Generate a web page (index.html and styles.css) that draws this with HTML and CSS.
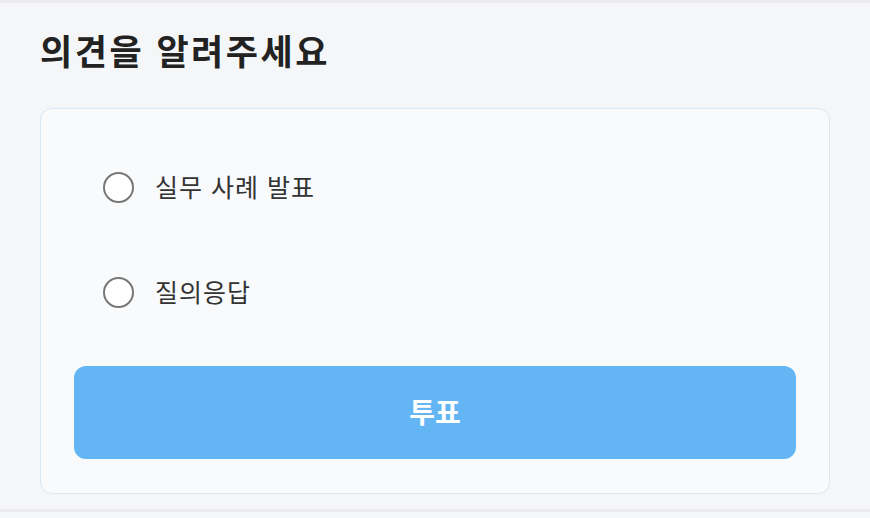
FILE: index.html
```html
<!DOCTYPE html>
<html lang="ko">
<head>
  <meta charset="UTF-8" />
  <meta name="viewport" content="width=device-width, initial-scale=1.0" />
  <title>의견을 알려주세요</title>
  <link rel="stylesheet" href="styles.css">
</head>
<body>
  <div class="poll-section">
    <h2 class="poll-title">의견을 알려주세요</h2>
    <form class="poll-card">
      <label class="poll-option">
        <input type="radio" name="vote" value="case">
        <span>실무 사례 발표</span>
      </label>
      <label class="poll-option">
        <input type="radio" name="vote" value="qna">
        <span>질의응답</span>
      </label>
      <button type="submit" class="vote-button">투표</button>
    </form>
  </div>
</body>
</html>
```

FILE: styles.css
```css
body {
  margin: 0;
  font-family: "Noto Sans CJK KR", "Noto Sans", sans-serif;
  background-color: #f5f6f8;
  color: #333;
}

.poll-section {
  border-top: 3px solid #ececee;
  border-bottom: 3px solid #ececee;
  padding: 23px 40px 19px 40px;
  height: 512px;
  box-sizing: border-box;
}

.poll-title {
  margin: 0 0 34px 0;
  font-size: 35px;
  font-weight: bold;
  letter-spacing: 2.5px;
  line-height: 48px;
  color: #222;
}

.poll-card {
  display: flex;
  flex-direction: column;
  background-color: #f8fafc;
  border: 1px solid #d9e8f4;
  border-radius: 12px;
  padding: 33px 33px 34px 33px;
}

.poll-option {
  display: flex;
  align-items: center;
  height: 90px;
  padding-left: 29px;
  margin-bottom: 15px;
  font-size: 25px;
  letter-spacing: 1px;
  color: #333;
  cursor: pointer;
}

.poll-option span {
  margin-top: -2px;
}

.poll-option input[type="radio"] {
  appearance: none;
  width: 31px;
  height: 31px;
  margin: 0 21px 0 0;
  border: 2px solid #777;
  border-radius: 50%;
  background-color: #fff;
  box-sizing: border-box;
}

.poll-option input[type="radio"]:checked {
  border-color: #63b5f4;
  background: radial-gradient(#63b5f4 40%, #fff 45%);
}

.vote-button {
  margin-top: 14px;
  height: 93px;
  padding-bottom: 5px;
  border: none;
  border-radius: 12px;
  background-color: #63b5f4;
  color: #fff;
  font-family: inherit;
  font-size: 28px;
  font-weight: bold;
  cursor: pointer;
}
```
